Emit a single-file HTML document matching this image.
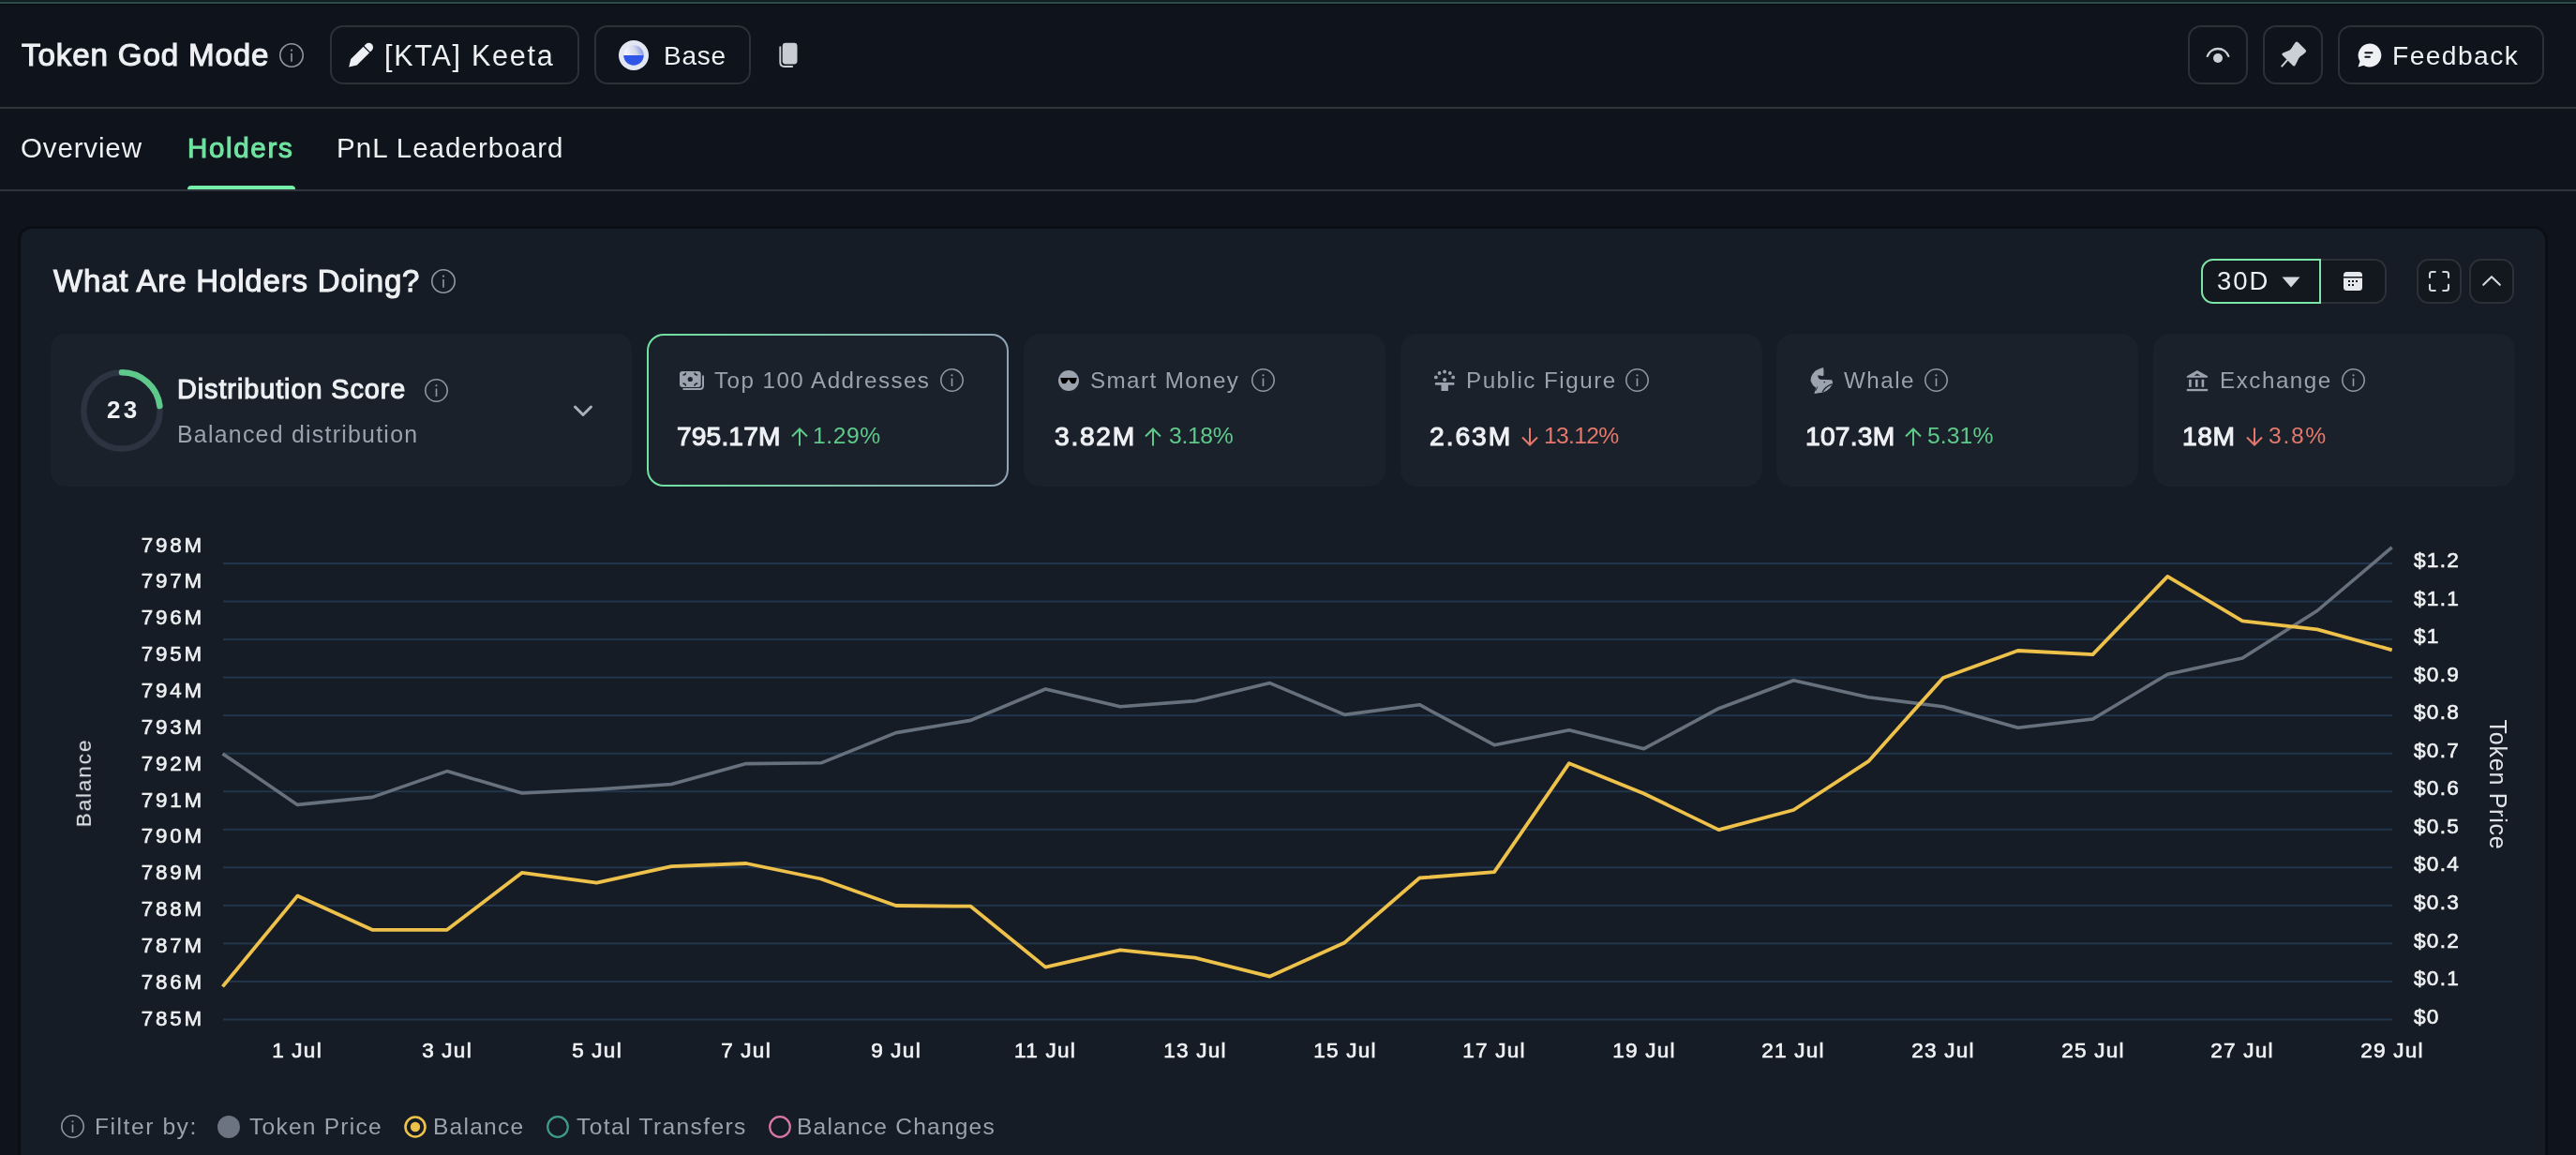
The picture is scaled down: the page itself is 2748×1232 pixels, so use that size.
<!DOCTYPE html><html><head><meta charset="utf-8"><style>
*{margin:0;padding:0;box-sizing:border-box}
html,body{width:2748px;height:1232px;overflow:hidden;background:#0f131b;font-family:"Liberation Sans",sans-serif}
.t{position:absolute;line-height:1;white-space:nowrap;will-change:transform}
.md{-webkit-text-stroke:0.65px currentColor}
.sb{-webkit-text-stroke:1.1px currentColor}
.a{position:absolute;display:block}
.box{position:absolute}
</style></head><body>
<div class="box" style="left:0;top:0;width:2748px;height:1px;background:#172022"></div><div class="box" style="left:0;top:1px;width:2748px;height:1px;background:#0d1c1e"></div><div class="box" style="left:0;top:2px;width:2748px;height:2px;background:#304b4b"></div><div class="box" style="left:0;top:4px;width:2748px;height:1px;background:#060d10"></div><div id="tgm" class="t sb" style="left:23.00px;top:42.20px;font-size:33.2px;font-weight:400;color:#eef0f3;letter-spacing:0.832px;">Token God Mode</div>
<svg class="a" style="left:298.0px;top:46.0px" width="26" height="26" viewBox="0 0 26 26"><circle cx="13.0" cy="13.0" r="12.20" fill="none" stroke="#8f97a1" stroke-width="1.6"/><rect x="12.20" y="10.92" width="1.6" height="8.84" fill="#8f97a1"/><circle cx="13.0" cy="7.54" r="1.1" fill="#8f97a1"/></svg>
<div class="box" style="left:352px;top:27px;width:266px;height:63px;border:2px solid #2c3138;border-radius:14px"></div><svg class="a" style="left:371px;top:45px" width="28" height="28" viewBox="0 0 28 28"><g transform="translate(1.2,26.6) rotate(-45)"><path d="M0 0 L7.5 -4.6 H30 A4.6 4.6 0 0 1 30 4.6 H7.5 Z" fill="#eef0f3"/><rect x="26.2" y="-5" width="1.3" height="10" fill="#0f131b"/></g></svg><div id="kta" class="t " style="left:410.00px;top:44.20px;font-size:30.6px;font-weight:400;color:#eef0f3;letter-spacing:1.7px;">[KTA] Keeta</div>
<div class="box" style="left:634px;top:27px;width:167px;height:63px;border:2px solid #2c3138;border-radius:14px"></div><svg class="a" style="left:660px;top:43px" width="32" height="32" viewBox="0 0 32 32"><defs><linearGradient id="bgr" x1="0" y1="0.2" x2="1" y2="0"><stop offset="0" stop-color="#f3f4fb"/><stop offset="0.5" stop-color="#d3d7ea"/><stop offset="1" stop-color="#6b7fe6"/></linearGradient></defs><circle cx="16" cy="16" r="16" fill="#e3e6f3"/><path d="M5.25 16 A10.75 10.75 0 0 1 26.75 16 Z" fill="url(#bgr)"/><path d="M5.25 16 A10.75 10.75 0 0 0 26.75 16 Z" fill="#2f56e6"/></svg><div id="base" class="t " style="left:708.00px;top:45.50px;font-size:28px;font-weight:400;color:#eef0f3;letter-spacing:0.766px;">Base</div>
<svg class="a" style="left:830px;top:45px" width="22" height="28" viewBox="0 0 22 28"><rect x="4.7" y="0.8" width="15.8" height="22.7" rx="3.4" fill="#c9ccd2"/><path d="M2.3 5.2 V21.6 Q2.3 26 6.7 26 H15.2" fill="none" stroke="#c9ccd2" stroke-width="1.9" stroke-linecap="round"/></svg><div class="box" style="left:2334px;top:27px;width:64px;height:63px;border:2px solid #2c3138;border-radius:14px"></div><svg class="a" style="left:2352px;top:48px" width="28" height="20" viewBox="0 0 28 20"><path d="M2.8 11.8 A12 12 0 0 1 25.3 11.8" fill="none" stroke="#ccd0d6" stroke-width="2.3" stroke-linecap="round"/><circle cx="14" cy="14" r="5" fill="#ccd0d6"/></svg><div class="box" style="left:2414px;top:27px;width:64px;height:63px;border:2px solid #2c3138;border-radius:14px"></div><svg class="a" style="left:2432px;top:44px" width="30" height="30" viewBox="0 0 30 30"><path d="M16.6 1.3 Q18 -0.2 19.6 1.2 L27.4 9 Q28.8 10.5 27.3 11.9 Q24.8 14.4 21.5 16.5 L20 18.5 Q18.3 22.3 16.6 25.6 Q15.5 27.3 14 26 L2.9 14.9 Q1.6 13.5 3.4 12.5 Q7 10.9 10.6 9.4 L12.5 7.6 Q14.4 4.3 16.6 1.3 Z" fill="#ccd0d6"/><path d="M8 20.2 L2.3 26.6" stroke="#ccd0d6" stroke-width="2" stroke-linecap="round"/></svg><div class="box" style="left:2494px;top:27px;width:220px;height:63px;border:2px solid #2c3138;border-radius:14px"></div><svg class="a" style="left:2514px;top:45px" width="28" height="28" viewBox="0 0 28 28"><path d="M14 1.5 A12.5 12.5 0 1 1 7.5 24.8 L1.5 26.5 L3.5 20.5 A12.5 12.5 0 0 1 14 1.5 Z" fill="#eef0f3"/><rect x="8.3" y="10.3" width="9.2" height="1.9" rx="0.95" fill="#0f131b"/><rect x="8.3" y="14.8" width="6.6" height="1.9" rx="0.95" fill="#0f131b"/></svg><div id="fb" class="t " style="left:2552.00px;top:45.13px;font-size:28.2px;font-weight:400;color:#eef0f3;letter-spacing:1.428px;">Feedback</div>
<div class="box" style="left:0;top:114px;width:2748px;height:2px;background:#30353b"></div><div id="tab1" class="t " style="left:22.00px;top:143.43px;font-size:29.5px;font-weight:400;color:#eef0f3;letter-spacing:0.857px;">Overview</div>
<div id="tab2" class="t sb" style="left:200.00px;top:142.63px;font-size:29.5px;font-weight:400;color:#6fe3a0;letter-spacing:1.666px;">Holders</div>
<div id="tab3" class="t " style="left:359.00px;top:143.43px;font-size:29.5px;font-weight:400;color:#eef0f3;letter-spacing:1.036px;">PnL Leaderboard</div>
<div class="box" style="left:200px;top:198px;width:115px;height:5px;background:#76f0a8;border-radius:4px 4px 0 0"></div><div class="box" style="left:0;top:202px;width:2748px;height:2px;background:#2f343c"></div><div class="box" style="left:22px;top:243.5px;width:2693px;height:1100px;background:#161c25;border-radius:12px;box-shadow:0 0 0 3px rgba(6,9,13,0.45)"></div><div id="title" class="t sb" style="left:56.60px;top:283.17px;font-size:33px;font-weight:400;color:#eef0f3;letter-spacing:0.823px;">What Are Holders Doing?</div>
<svg class="a" style="left:460.0px;top:287.0px" width="26" height="26" viewBox="0 0 26 26"><circle cx="13.0" cy="13.0" r="12.20" fill="none" stroke="#8f97a1" stroke-width="1.6"/><rect x="12.20" y="10.92" width="1.6" height="8.84" fill="#8f97a1"/><circle cx="13.0" cy="7.54" r="1.1" fill="#8f97a1"/></svg>
<div class="box" style="left:2348px;top:276px;width:198px;height:48px;background:#13181f;border:2px solid #2c3138;border-radius:13px"></div><div class="box" style="left:2348px;top:276px;width:128px;height:48px;border:2px solid #7be6a6;border-radius:13px 0 0 13px"></div><div id="d30" class="t " style="left:2364.60px;top:286.32px;font-size:27.5px;font-weight:400;color:#eef0f3;letter-spacing:1.95px;">30D</div>
<svg class="a" style="left:2434px;top:295px" width="20" height="12" viewBox="0 0 20 12"><path d="M0.5 0.5 L19.5 0.5 L10 11.5 Z" fill="#d5d8dd"/></svg><svg class="a" style="left:2500px;top:290px" width="20" height="20" viewBox="0 0 20 20"><rect x="0" y="0" width="20" height="20" rx="3.5" fill="#e6e8eb"/><rect x="0" y="5" width="20" height="1.5" fill="#11161e"/><rect x="5" y="9" width="2" height="2" fill="#11161e"/><rect x="9" y="9" width="2" height="2" fill="#11161e"/><rect x="13" y="9" width="2" height="2" fill="#11161e"/><rect x="5" y="13" width="2" height="2" fill="#11161e"/><rect x="9" y="13" width="2" height="2" fill="#11161e"/></svg><div class="box" style="left:2578px;top:276px;width:48px;height:48px;background:#13181f;border:2px solid #2c3138;border-radius:13px"></div><svg class="a" style="left:2590px;top:288px" width="24" height="24" viewBox="0 0 24 24"><path d="M2 8 V4.5 Q2 2 4.5 2 H7.8 M16.2 2 H19.5 Q22 2 22 4.5 V8 M22 15.8 V19.5 Q22 22 19.5 22 H16.2 M7.8 22 H4.5 Q2 22 2 19.5 V15.8" fill="none" stroke="#d5d8dd" stroke-width="2.1" stroke-linecap="round"/></svg><div class="box" style="left:2634px;top:276px;width:48px;height:48px;background:#13181f;border:2px solid #2c3138;border-radius:13px"></div><svg class="a" style="left:2647px;top:292px" width="22" height="14" viewBox="0 0 22 14"><path d="M2.2 11.8 L11 3.2 L19.8 11.8" fill="none" stroke="#d5d8dd" stroke-width="2.1" stroke-linecap="round" stroke-linejoin="round"/></svg><div class="box" style="left:54px;top:356px;width:620px;height:163px;background:#1a212b;border-radius:16px"></div><svg class="a" style="left:84px;top:392px" width="92" height="92" viewBox="0 0 92 92"><circle cx="46" cy="46" r="40.7" fill="none" stroke="#2b3440" stroke-width="6.5"/><path d="M46 5.3 A40.7 40.7 0 0 1 86.4 41" fill="none" stroke="#5ec98a" stroke-width="6.5" stroke-linecap="round"/></svg><div id="n23" class="t " style="left:113.80px;top:424.29px;font-size:26px;font-weight:700;color:#eef0f3;letter-spacing:3.3px;">23</div>
<div id="ds" class="t sb" style="left:189.00px;top:401.22px;font-size:28.8px;font-weight:400;color:#eef0f3;letter-spacing:0.941px;">Distribution Score</div>
<svg class="a" style="left:452.5px;top:403.5px" width="25" height="25" viewBox="0 0 25 25"><circle cx="12.5" cy="12.5" r="11.70" fill="none" stroke="#8f97a1" stroke-width="1.6"/><rect x="11.70" y="10.50" width="1.6" height="8.50" fill="#8f97a1"/><circle cx="12.5" cy="7.25" r="1.1" fill="#8f97a1"/></svg>
<div id="bd" class="t " style="left:189.00px;top:450.72px;font-size:24.9px;font-weight:400;color:#9aa2ad;letter-spacing:1.25px;">Balanced distribution</div>
<svg class="a" style="left:611px;top:431px" width="22" height="15" viewBox="0 0 22 15"><path d="M2.5 3 L11 11.5 L19.5 3" fill="none" stroke="#a9b0b9" stroke-width="3" stroke-linecap="round" stroke-linejoin="round"/></svg><div class="box" style="left:690px;top:356px;width:386px;height:163px;background:#1a212b;border-radius:18px"></div><svg class="a" style="left:690px;top:356px" width="386" height="163" viewBox="0 0 386 163"><defs><linearGradient id="bg1" x1="0" y1="0" x2="1" y2="0"><stop offset="0" stop-color="#6fe3a0"/><stop offset="1" stop-color="#8fa3b5"/></linearGradient></defs><rect x="1" y="1" width="384" height="161" rx="17" fill="none" stroke="url(#bg1)" stroke-width="2"/></svg><div id="lab0" class="t " style="left:762.20px;top:393.51px;font-size:24.2px;font-weight:400;color:#9aa2ad;letter-spacing:1.452px;">Top 100 Addresses</div>
<svg class="a" style="left:1003.3px;top:393.3px" width="25" height="25" viewBox="0 0 25 25"><circle cx="12.5" cy="12.5" r="11.70" fill="none" stroke="#8f97a1" stroke-width="1.6"/><rect x="11.70" y="10.50" width="1.6" height="8.50" fill="#8f97a1"/><circle cx="12.5" cy="7.25" r="1.1" fill="#8f97a1"/></svg>
<div id="val0" class="t sb" style="left:722.20px;top:451.03px;font-size:28.2px;font-weight:400;color:#eef0f3;letter-spacing:0.118px;">795.17M</div>
<div id="pct0" class="t " style="left:867.20px;top:452.99px;font-size:24.7px;font-weight:400;color:#5fc98a;letter-spacing:0.55px;">1.29%</div>
<svg class="a" style="left:843.6px;top:456px" width="18" height="20" viewBox="0 0 18 20"><path d="M9 19.5 V1.5 M1 9.5 L9 1.5 L17 9.5" fill="none" stroke="#5fc98a" stroke-width="2"/></svg><div class="box" style="left:1092px;top:356px;width:386px;height:163px;background:#1a212b;border-radius:18px"></div><div id="lab1" class="t " style="left:1163.00px;top:393.51px;font-size:24.2px;font-weight:400;color:#9aa2ad;letter-spacing:1.4px;">Smart Money</div>
<svg class="a" style="left:1335.3px;top:393.3px" width="25" height="25" viewBox="0 0 25 25"><circle cx="12.5" cy="12.5" r="11.70" fill="none" stroke="#8f97a1" stroke-width="1.6"/><rect x="11.70" y="10.50" width="1.6" height="8.50" fill="#8f97a1"/><circle cx="12.5" cy="7.25" r="1.1" fill="#8f97a1"/></svg>
<div id="val1" class="t sb" style="left:1124.60px;top:451.03px;font-size:28.2px;font-weight:400;color:#eef0f3;letter-spacing:1.725px;">3.82M</div>
<div id="pct1" class="t " style="left:1246.80px;top:452.99px;font-size:24.7px;font-weight:400;color:#5fc98a;letter-spacing:-0.35px;">3.18%</div>
<svg class="a" style="left:1221px;top:456px" width="18" height="20" viewBox="0 0 18 20"><path d="M9 19.5 V1.5 M1 9.5 L9 1.5 L17 9.5" fill="none" stroke="#5fc98a" stroke-width="2"/></svg><div class="box" style="left:1494px;top:356px;width:386px;height:163px;background:#1a212b;border-radius:18px"></div><div id="lab2" class="t " style="left:1564.00px;top:393.51px;font-size:24.2px;font-weight:400;color:#9aa2ad;letter-spacing:1.5px;">Public Figure</div>
<svg class="a" style="left:1734.4px;top:393.3px" width="25" height="25" viewBox="0 0 25 25"><circle cx="12.5" cy="12.5" r="11.70" fill="none" stroke="#8f97a1" stroke-width="1.6"/><rect x="11.70" y="10.50" width="1.6" height="8.50" fill="#8f97a1"/><circle cx="12.5" cy="7.25" r="1.1" fill="#8f97a1"/></svg>
<div id="val2" class="t sb" style="left:1525.40px;top:451.03px;font-size:28.2px;font-weight:400;color:#eef0f3;letter-spacing:1.975px;">2.63M</div>
<div id="pct2" class="t " style="left:1647.00px;top:452.99px;font-size:24.7px;font-weight:400;color:#e5786b;letter-spacing:-0.7px;">13.12%</div>
<svg class="a" style="left:1623px;top:456px" width="18" height="20" viewBox="0 0 18 20"><path d="M9 0.5 V18.5 M1 10.5 L9 18.5 L17 10.5" fill="none" stroke="#e5786b" stroke-width="2"/></svg><div class="box" style="left:1895px;top:356px;width:386px;height:163px;background:#1a212b;border-radius:18px"></div><div id="lab3" class="t " style="left:1967.00px;top:393.51px;font-size:24.2px;font-weight:400;color:#9aa2ad;letter-spacing:1.5px;">Whale</div>
<svg class="a" style="left:2053.0px;top:393.3px" width="25" height="25" viewBox="0 0 25 25"><circle cx="12.5" cy="12.5" r="11.70" fill="none" stroke="#8f97a1" stroke-width="1.6"/><rect x="11.70" y="10.50" width="1.6" height="8.50" fill="#8f97a1"/><circle cx="12.5" cy="7.25" r="1.1" fill="#8f97a1"/></svg>
<div id="val3" class="t sb" style="left:1926.00px;top:451.03px;font-size:28.2px;font-weight:400;color:#eef0f3;letter-spacing:0.24px;">107.3M</div>
<div id="pct3" class="t " style="left:2056.40px;top:452.99px;font-size:24.7px;font-weight:400;color:#5fc98a;letter-spacing:0.1px;">5.31%</div>
<svg class="a" style="left:2032px;top:456px" width="18" height="20" viewBox="0 0 18 20"><path d="M9 19.5 V1.5 M1 9.5 L9 1.5 L17 9.5" fill="none" stroke="#5fc98a" stroke-width="2"/></svg><div class="box" style="left:2297px;top:356px;width:386px;height:163px;background:#1a212b;border-radius:18px"></div><div id="lab4" class="t " style="left:2367.80px;top:393.51px;font-size:24.2px;font-weight:400;color:#9aa2ad;letter-spacing:1.527px;">Exchange</div>
<svg class="a" style="left:2497.5px;top:393.3px" width="25" height="25" viewBox="0 0 25 25"><circle cx="12.5" cy="12.5" r="11.70" fill="none" stroke="#8f97a1" stroke-width="1.6"/><rect x="11.70" y="10.50" width="1.6" height="8.50" fill="#8f97a1"/><circle cx="12.5" cy="7.25" r="1.1" fill="#8f97a1"/></svg>
<div id="val4" class="t sb" style="left:2328.00px;top:451.03px;font-size:28.2px;font-weight:400;color:#eef0f3;letter-spacing:0.6px;">18M</div>
<div id="pct4" class="t " style="left:2420.00px;top:452.99px;font-size:24.7px;font-weight:400;color:#e5786b;letter-spacing:1.667px;">3.8%</div>
<svg class="a" style="left:2395.6px;top:456px" width="18" height="20" viewBox="0 0 18 20"><path d="M9 0.5 V18.5 M1 10.5 L9 18.5 L17 10.5" fill="none" stroke="#e5786b" stroke-width="2"/></svg><svg class="a" style="left:724px;top:395px" width="28" height="22" viewBox="0 0 28 22"><rect x="1" y="1" width="22.7" height="17" rx="3" fill="#9ba3ae"/><circle cx="12.3" cy="9.5" r="2.6" fill="#1a212b"/><path d="M4.5 5 Q7.5 5 7.5 2.5 M17 2.5 Q17 5 20.2 5 M4.5 14 Q7.5 14 7.5 16.8 M17 16.8 Q17 14 20.2 14" fill="none" stroke="#1a212b" stroke-width="1.4"/><path d="M26 5.5 V16.5 Q26 20 22.5 20 H4.5" fill="none" stroke="#9ba3ae" stroke-width="2"/></svg><svg class="a" style="left:1129px;top:394.7px" width="22" height="22" viewBox="0 0 22 22"><circle cx="11" cy="11" r="11" fill="#9ba3ae"/><path d="M2.2 8 H19.8 L19 11.5 Q18.5 14.2 16 14.2 Q13.3 14.2 12.3 11.5 L11.3 9.8 H10.7 L9.7 11.5 Q8.7 14.2 6 14.2 Q3.5 14.2 3 11.5 Z" fill="#000"/></svg><svg class="a" style="left:1528px;top:393px" width="26" height="26" viewBox="0 0 26 26"><circle cx="3.8" cy="9.4" r="1.9" fill="#9ba3ae"/><circle cx="7.5" cy="5" r="1.9" fill="#9ba3ae"/><circle cx="13.1" cy="3.5" r="1.9" fill="#9ba3ae"/><circle cx="18.8" cy="5" r="1.9" fill="#9ba3ae"/><circle cx="22.2" cy="9.4" r="1.9" fill="#9ba3ae"/><circle cx="13.1" cy="12.1" r="2.1" fill="#9ba3ae"/><rect x="2.8" y="15" width="20.7" height="2.7" rx="1" fill="#9ba3ae"/><rect x="9.5" y="16.5" width="7.4" height="7.5" fill="#9ba3ae"/></svg><svg class="a" style="left:1930px;top:391px" width="26" height="30" viewBox="0 0 26 30"><path d="M15.1 1.1 Q15.8 5 15.4 9.4 Q13.2 10.6 11.5 9.6 L9 9.4 Q9.4 12.6 11.5 13.8 L24.2 14.2 Q25.8 16.5 24.4 19.4 Q22.2 23.5 19 25.5 Q16.5 27 14.8 27.4 L5.4 29 Q6.4 26 7.2 22.8 Q3.2 20 1.6 15.5 Q1.4 10 4.8 6.4 Q8.2 2.8 15.1 1.1 Z" fill="#9ba3ae"/><path d="M14.2 27.3 Q16.5 21.6 24.6 18.6" fill="none" stroke="#1a212b" stroke-width="1.3"/><path d="M8.6 21.5 Q8 24 6.8 26" fill="none" stroke="#1a212b" stroke-width="0.9"/><circle cx="16.3" cy="16.6" r="0.8" fill="#1a212b"/></svg><svg class="a" style="left:2332px;top:394px" width="24" height="24" viewBox="0 0 24 24"><path d="M11.9 1 L23.2 7.3 Q23.5 8.8 22.2 8.8 H1.6 Q0.3 8.8 0.8 7.3 Z" fill="#9ba3ae"/><path d="M8.5 6.8 L11.9 4.6 L15.3 6.8 Z" fill="#1a212b"/><rect x="3.1" y="10.8" width="2.6" height="8" fill="#9ba3ae"/><rect x="10" y="10.8" width="2.6" height="8" fill="#9ba3ae"/><rect x="16.6" y="10.8" width="2.6" height="8" fill="#9ba3ae"/><rect x="0.8" y="20.9" width="22.4" height="2.3" fill="#9ba3ae"/></svg><svg class="a" style="left:0;top:0" width="2748" height="1232" viewBox="0 0 2748 1232"><rect x="238" y="600.00" width="2314" height="2" fill="#21354c"/><rect x="238" y="640.54" width="2314" height="2" fill="#21354c"/><rect x="238" y="681.08" width="2314" height="2" fill="#21354c"/><rect x="238" y="721.62" width="2314" height="2" fill="#21354c"/><rect x="238" y="762.16" width="2314" height="2" fill="#21354c"/><rect x="238" y="802.70" width="2314" height="2" fill="#21354c"/><rect x="238" y="843.24" width="2314" height="2" fill="#21354c"/><rect x="238" y="883.78" width="2314" height="2" fill="#21354c"/><rect x="238" y="924.32" width="2314" height="2" fill="#21354c"/><rect x="238" y="964.86" width="2314" height="2" fill="#21354c"/><rect x="238" y="1005.40" width="2314" height="2" fill="#21354c"/><rect x="238" y="1045.94" width="2314" height="2" fill="#21354c"/><rect x="238" y="1086.48" width="2314" height="2" fill="#21354c"/><polyline points="237.5,803.9 317.3,858.4 397.1,850.4 476.9,822.6 556.7,846.0 636.5,842.1 716.3,836.5 796.1,814.6 875.9,813.8 955.7,781.6 1035.5,768.4 1115.3,735.0 1195.1,753.7 1274.9,747.7 1354.7,728.6 1434.5,762.4 1514.3,751.7 1594.1,794.7 1673.9,778.8 1753.7,798.7 1833.5,755.7 1913.3,725.8 1993.1,743.7 2072.9,753.8 2152.7,776.3 2232.5,767.0 2312.3,719.2 2392.1,702.1 2471.9,651.5 2551.7,583.8" fill="none" stroke="#67717e" stroke-width="3.6" stroke-linejoin="round"/><polyline points="237.5,1052.4 317.3,955.6 397.1,991.8 476.9,991.8 556.7,930.9 636.5,941.6 716.3,924.1 796.1,921.0 875.9,937.5 955.7,966.0 1035.5,966.7 1115.3,1031.6 1195.1,1013.3 1274.9,1021.7 1354.7,1041.6 1434.5,1005.4 1514.3,936.5 1594.1,930.1 1673.9,814.2 1753.7,846.5 1833.5,885.1 1913.3,864.0 1993.1,812.2 2072.9,723.0 2152.7,694.0 2232.5,698.1 2312.3,614.9 2392.1,662.3 2471.9,671.4 2551.7,693.3" fill="none" stroke="#eec14a" stroke-width="3.8" stroke-linejoin="round"/></svg>
<div class="t md" style="left:-782.00px;width:1000px;text-align:right;top:570.62px;font-size:22.3px;font-weight:400;color:#eef0f2;letter-spacing:2.9px;">798M</div>
<div class="t md" style="left:-782.00px;width:1000px;text-align:right;top:609.47px;font-size:22.3px;font-weight:400;color:#eef0f2;letter-spacing:2.9px;">797M</div>
<div class="t md" style="left:-782.00px;width:1000px;text-align:right;top:648.32px;font-size:22.3px;font-weight:400;color:#eef0f2;letter-spacing:2.9px;">796M</div>
<div class="t md" style="left:-782.00px;width:1000px;text-align:right;top:687.17px;font-size:22.3px;font-weight:400;color:#eef0f2;letter-spacing:2.9px;">795M</div>
<div class="t md" style="left:-782.00px;width:1000px;text-align:right;top:726.02px;font-size:22.3px;font-weight:400;color:#eef0f2;letter-spacing:2.9px;">794M</div>
<div class="t md" style="left:-782.00px;width:1000px;text-align:right;top:764.87px;font-size:22.3px;font-weight:400;color:#eef0f2;letter-spacing:2.9px;">793M</div>
<div class="t md" style="left:-782.00px;width:1000px;text-align:right;top:803.72px;font-size:22.3px;font-weight:400;color:#eef0f2;letter-spacing:2.9px;">792M</div>
<div class="t md" style="left:-782.00px;width:1000px;text-align:right;top:842.57px;font-size:22.3px;font-weight:400;color:#eef0f2;letter-spacing:2.9px;">791M</div>
<div class="t md" style="left:-782.00px;width:1000px;text-align:right;top:881.42px;font-size:22.3px;font-weight:400;color:#eef0f2;letter-spacing:2.9px;">790M</div>
<div class="t md" style="left:-782.00px;width:1000px;text-align:right;top:920.27px;font-size:22.3px;font-weight:400;color:#eef0f2;letter-spacing:2.9px;">789M</div>
<div class="t md" style="left:-782.00px;width:1000px;text-align:right;top:959.12px;font-size:22.3px;font-weight:400;color:#eef0f2;letter-spacing:2.9px;">788M</div>
<div class="t md" style="left:-782.00px;width:1000px;text-align:right;top:997.97px;font-size:22.3px;font-weight:400;color:#eef0f2;letter-spacing:2.9px;">787M</div>
<div class="t md" style="left:-782.00px;width:1000px;text-align:right;top:1036.82px;font-size:22.3px;font-weight:400;color:#eef0f2;letter-spacing:2.9px;">786M</div>
<div class="t md" style="left:-782.00px;width:1000px;text-align:right;top:1075.67px;font-size:22.3px;font-weight:400;color:#eef0f2;letter-spacing:2.9px;">785M</div>
<div class="t md" style="left:2575.00px;top:587.17px;font-size:22.6px;font-weight:400;color:#eef0f2;letter-spacing:1.3px;">$1.2</div>
<div class="t md" style="left:2575.00px;top:627.71px;font-size:22.6px;font-weight:400;color:#eef0f2;letter-spacing:1.3px;">$1.1</div>
<div class="t md" style="left:2575.00px;top:668.25px;font-size:22.6px;font-weight:400;color:#eef0f2;letter-spacing:1.3px;">$1</div>
<div class="t md" style="left:2575.00px;top:708.79px;font-size:22.6px;font-weight:400;color:#eef0f2;letter-spacing:1.3px;">$0.9</div>
<div class="t md" style="left:2575.00px;top:749.33px;font-size:22.6px;font-weight:400;color:#eef0f2;letter-spacing:1.3px;">$0.8</div>
<div class="t md" style="left:2575.00px;top:789.87px;font-size:22.6px;font-weight:400;color:#eef0f2;letter-spacing:1.3px;">$0.7</div>
<div class="t md" style="left:2575.00px;top:830.41px;font-size:22.6px;font-weight:400;color:#eef0f2;letter-spacing:1.3px;">$0.6</div>
<div class="t md" style="left:2575.00px;top:870.95px;font-size:22.6px;font-weight:400;color:#eef0f2;letter-spacing:1.3px;">$0.5</div>
<div class="t md" style="left:2575.00px;top:911.49px;font-size:22.6px;font-weight:400;color:#eef0f2;letter-spacing:1.3px;">$0.4</div>
<div class="t md" style="left:2575.00px;top:952.03px;font-size:22.6px;font-weight:400;color:#eef0f2;letter-spacing:1.3px;">$0.3</div>
<div class="t md" style="left:2575.00px;top:992.57px;font-size:22.6px;font-weight:400;color:#eef0f2;letter-spacing:1.3px;">$0.2</div>
<div class="t md" style="left:2575.00px;top:1033.11px;font-size:22.6px;font-weight:400;color:#eef0f2;letter-spacing:1.3px;">$0.1</div>
<div class="t md" style="left:2575.00px;top:1073.65px;font-size:22.6px;font-weight:400;color:#eef0f2;letter-spacing:1.3px;">$0</div>
<div class="t md" style="left:217.30px;width:200px;text-align:center;top:1110.07px;font-size:22.6px;font-weight:400;color:#f0f2f5;letter-spacing:1.2px;">1 Jul</div>
<div class="t md" style="left:376.90px;width:200px;text-align:center;top:1110.07px;font-size:22.6px;font-weight:400;color:#f0f2f5;letter-spacing:1.2px;">3 Jul</div>
<div class="t md" style="left:536.50px;width:200px;text-align:center;top:1110.07px;font-size:22.6px;font-weight:400;color:#f0f2f5;letter-spacing:1.2px;">5 Jul</div>
<div class="t md" style="left:696.10px;width:200px;text-align:center;top:1110.07px;font-size:22.6px;font-weight:400;color:#f0f2f5;letter-spacing:1.2px;">7 Jul</div>
<div class="t md" style="left:855.70px;width:200px;text-align:center;top:1110.07px;font-size:22.6px;font-weight:400;color:#f0f2f5;letter-spacing:1.2px;">9 Jul</div>
<div class="t md" style="left:1015.30px;width:200px;text-align:center;top:1110.07px;font-size:22.6px;font-weight:400;color:#f0f2f5;letter-spacing:1.2px;">11 Jul</div>
<div class="t md" style="left:1174.90px;width:200px;text-align:center;top:1110.07px;font-size:22.6px;font-weight:400;color:#f0f2f5;letter-spacing:1.2px;">13 Jul</div>
<div class="t md" style="left:1334.50px;width:200px;text-align:center;top:1110.07px;font-size:22.6px;font-weight:400;color:#f0f2f5;letter-spacing:1.2px;">15 Jul</div>
<div class="t md" style="left:1494.10px;width:200px;text-align:center;top:1110.07px;font-size:22.6px;font-weight:400;color:#f0f2f5;letter-spacing:1.2px;">17 Jul</div>
<div class="t md" style="left:1653.70px;width:200px;text-align:center;top:1110.07px;font-size:22.6px;font-weight:400;color:#f0f2f5;letter-spacing:1.2px;">19 Jul</div>
<div class="t md" style="left:1813.30px;width:200px;text-align:center;top:1110.07px;font-size:22.6px;font-weight:400;color:#f0f2f5;letter-spacing:1.2px;">21 Jul</div>
<div class="t md" style="left:1972.90px;width:200px;text-align:center;top:1110.07px;font-size:22.6px;font-weight:400;color:#f0f2f5;letter-spacing:1.2px;">23 Jul</div>
<div class="t md" style="left:2132.50px;width:200px;text-align:center;top:1110.07px;font-size:22.6px;font-weight:400;color:#f0f2f5;letter-spacing:1.2px;">25 Jul</div>
<div class="t md" style="left:2292.10px;width:200px;text-align:center;top:1110.07px;font-size:22.6px;font-weight:400;color:#f0f2f5;letter-spacing:1.2px;">27 Jul</div>
<div class="t md" style="left:2451.70px;width:200px;text-align:center;top:1110.07px;font-size:22.6px;font-weight:400;color:#f0f2f5;letter-spacing:1.2px;">29 Jul</div>
<div class="t " style="left:-12.70px;width:200px;text-align:center;top:826.30px;font-size:22.8px;font-weight:400;color:#dfe2e7;letter-spacing:1.75px;transform:rotate(-90deg);transform-origin:50% 40%;">Balance</div>
<div class="t " style="left:2517.00px;width:300px;text-align:center;top:826.54px;font-size:25px;font-weight:400;color:#dfe2e7;letter-spacing:0.74px;transform:rotate(90deg);transform-origin:50% 40%;">Token Price</div>
<svg class="a" style="left:65.3px;top:1189.3px" width="25" height="25" viewBox="0 0 25 25"><circle cx="12.5" cy="12.5" r="11.70" fill="none" stroke="#8f97a1" stroke-width="1.6"/><rect x="11.70" y="10.50" width="1.6" height="8.50" fill="#8f97a1"/><circle cx="12.5" cy="7.25" r="1.1" fill="#8f97a1"/></svg>
<div id="lg0" class="t " style="left:101.00px;top:1190.18px;font-size:24.6px;font-weight:400;color:#9aa2ad;letter-spacing:1.556px;">Filter by:</div>
<svg class="a" style="left:232px;top:1190px" width="24" height="24" viewBox="0 0 24 24"><circle cx="12" cy="12" r="12" fill="#6b7480"/></svg><div id="lg1" class="t " style="left:265.60px;top:1190.18px;font-size:24.6px;font-weight:400;color:#9aa2ad;letter-spacing:1.21px;">Token Price</div>
<svg class="a" style="left:431px;top:1190px" width="24" height="24" viewBox="0 0 24 24"><circle cx="12" cy="12" r="10.5" fill="none" stroke="#eec14a" stroke-width="2.6"/><circle cx="12" cy="12" r="5.2" fill="#eec14a"/></svg><div id="lg2" class="t " style="left:462.00px;top:1190.18px;font-size:24.6px;font-weight:400;color:#9aa2ad;letter-spacing:1.199px;">Balance</div>
<svg class="a" style="left:583px;top:1190px" width="24" height="24" viewBox="0 0 24 24"><circle cx="12" cy="12" r="10.8" fill="none" stroke="#3f9a8c" stroke-width="2.2"/></svg><div id="lg3" class="t " style="left:615.00px;top:1190.18px;font-size:24.6px;font-weight:400;color:#9aa2ad;letter-spacing:1.363px;">Total Transfers</div>
<svg class="a" style="left:820px;top:1190px" width="24" height="24" viewBox="0 0 24 24"><circle cx="12" cy="12" r="10.8" fill="none" stroke="#d777a8" stroke-width="2.2"/></svg><div id="lg4" class="t " style="left:850.40px;top:1190.18px;font-size:24.6px;font-weight:400;color:#9aa2ad;letter-spacing:1.187px;">Balance Changes</div>
</body></html>
